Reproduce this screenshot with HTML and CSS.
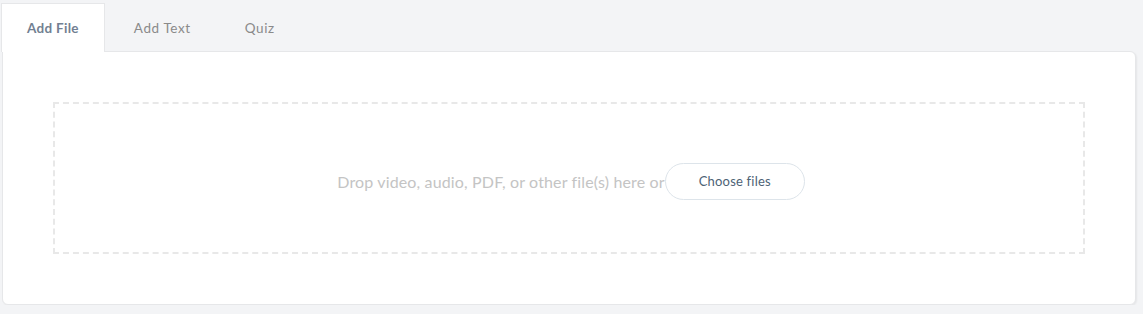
FILE: index.html
```html
<!DOCTYPE html>
<html>
<head>
    <title>Upload</title>
    <link rel="stylesheet" href="styles.css">
</head>
<body>
    <div class="tabs">
        <div class="tab active">Add File</div>
        <div class="tab">Add Text</div>
        <div class="tab">Quiz</div>
    </div>
    <div class="panel">
        <div class="dropzone">
            <span class="drop-text">Drop video, audio, PDF, or other file(s) here or</span>
            <button class="choose">Choose files</button>
        </div>
    </div>
</body>
</html>
```

FILE: styles.css
```css
body {
    margin: 0;
    padding: 3px 7px 0 1px;
    background-color: #f3f4f6;
    font-family: Lato, "Liberation Sans", sans-serif;
}
.tabs {
    display: flex;
    position: relative;
    z-index: 1;
}
.tab {
    height: 48px;
    line-height: 48px;
    padding: 0 27px 0 28px;
    font-size: 13.5px;
    letter-spacing: 0.6px;
    color: #8a8a8a;
    border: 1px solid transparent;
    border-bottom: none;
    box-sizing: border-box;
}
.tab + .tab + .tab {
    padding-left: 25px;
}
.tab.active {
    background-color: #fff;
    border-color: #e6e7e9;
    color: #727f92;
    font-weight: bold;
    letter-spacing: 0.3px;
    padding: 0 25px;
    height: 49px;
}
.panel {
    margin-left: 1px;
    background-color: #fff;
    border: 1px solid #e6e7e9;
    border-radius: 0 6px 6px 6px;
    box-shadow: 1px 1px 2px rgba(0, 0, 0, 0.06);
    padding: 50px;
    margin-top: -1px;
}
.dropzone {
    border: 2px dashed #e8e8e8;
    display: flex;
    align-items: center;
    justify-content: center;
    padding-top: 6px;
    padding-left: 4px;
    height: 142px;
}
.drop-text {
    font-size: 16px;
    letter-spacing: 0.15px;
    color: #c4c4c4;
}
.choose {
    font-family: Lato, "Liberation Sans", sans-serif;
    font-size: 13px;
    letter-spacing: 0.2px;
    color: #4d6275;
    background: #fff;
    border: 1px solid #dde4ea;
    border-radius: 20px;
    width: 140px;
    height: 37px;
    cursor: pointer;
}
```
